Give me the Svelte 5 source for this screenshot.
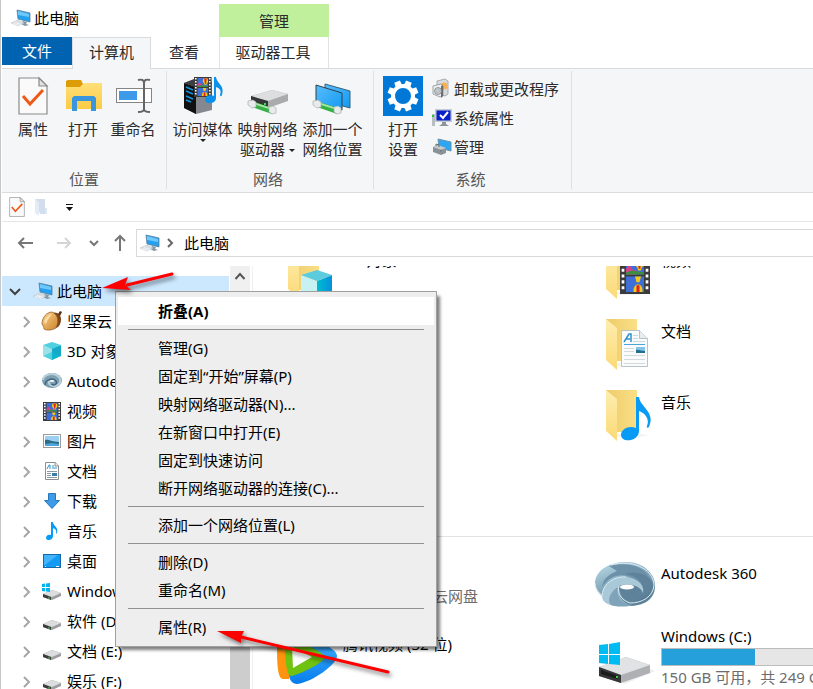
<script>
  let active = $state('computer');
  let selected = $state('此电脑');

  const tree = [
    { label: '坚果云', icon: 'nut' },
    { label: '3D 对象', icon: 'cube' },
    { label: 'Autodesk 360', icon: 'swirl' },
    { label: '视频', icon: 'film' },
    { label: '图片', icon: 'picture' },
    { label: '文档', icon: 'doc' },
    { label: '下载', icon: 'down' },
    { label: '音乐', icon: 'note' },
    { label: '桌面', icon: 'desktop' },
    { label: 'Windows (C:)', icon: 'windrive' },
    { label: '软件 (D:)', icon: 'drive' },
    { label: '文档 (E:)', icon: 'drive' },
    { label: '娱乐 (F:)', icon: 'drive' },
  ];

  const folders = [
    { label: '3D 对象', icon: 'cube' },
    { label: '视频', icon: 'film' },
    { label: '图片', icon: '' },
    { label: '文档', icon: 'doc' },
    { label: '下载', icon: '' },
    { label: '音乐', icon: 'note' },
    { label: '桌面', icon: '' },
  ];

  const devices = [
    { label: '百度网盘', icon: '', note: '双击运行百度云网盘' },
    { label: 'Autodesk 360', icon: 'swirl' },
    { label: '腾讯视频 (32 位)', icon: 'tencent' },
    { label: 'Windows (C:)', icon: 'windrive', used: 40, note: '150 GB 可用，共 249 GB' },
  ];

  // each inner list is one block between separators
  const menu = [
    ['折叠(A)'],
    ['管理(G)', '固定到“开始”屏幕(P)', '映射网络驱动器(N)...', '在新窗口中打开(E)', '固定到快速访问', '断开网络驱动器的连接(C)...'],
    ['添加一个网络位置(L)'],
    ['删除(D)', '重命名(M)'],
    ['属性(R)'],
  ];
</script>

{#snippet film()}
  <rect width="20" height="20" fill="#3b3b3b" />
  <rect x="4" width="12" height="9" y="1" fill="#3d6fd6" />
  <rect x="4" width="12" height="8" y="11" fill="#3d6fd6" />
  <path d="M4 7l2-2 3 3h2v2H4z" fill="#d8428c" />
  <path d="M4 9l4-1 8 1v1H4z" fill="#3c8f3f" />
  <path d="M10 4a3 3 0 0 1 6 0c0 2-2 2-2 4h-2c0-2-2-2-2-4z" fill="#f2c81e" />
  <path d="M11.500 1.500h3L13.500 7h-1z" fill="#d22" />
  <path d="M9 18a3 3 0 0 1 6 0v1H9zM10 11h4l-1 3h-2z" fill="#f2c81e" />
  <path d="M11 15.500h2v3.500h-2z" fill="#d22" />
  <path d="M2 1v18M18 1v18" stroke="#fff" stroke-width="1.800" stroke-dasharray="1.600 1.400" />
{/snippet}

{#snippet pc()}
  <svg class="i20" viewBox="0 0 20 20">
    <path d="M6 2l13 3v9L7 11z" fill="#23a0f0" stroke="#5c7f96" stroke-width=".8" />
    <path d="M7 3l11 3v3L7 7z" fill="#6fc8fb" />
    <path d="M12 13l4 1-1 2 3 1-4 1-4-2z" fill="#8497a3" />
    <path d="M0 15l7-3 6 3-6 3z" fill="#d9dfe4" stroke="#c0c9d0" stroke-width=".6" />
    <path d="M2 15.500l6 2M4 14.500l6 2" stroke="#fff" stroke-width=".7" />
  </svg>
{/snippet}

{#snippet sheet(cls)}
  <svg class={cls} viewBox="6 1 30 38">
    <path d="M7 2h20l8 8v28H7z" fill="#fafafa" stroke="#8a8a8a" stroke-width="1.200" />
    <path d="M27 2v8h8z" fill="#e2e2e2" stroke="#8a8a8a" stroke-width="1.200" />
    <path d="M11 20l7 8 13-14" fill="none" stroke="#ee5a16" stroke-width="3" />
  </svg>
{/snippet}

{#snippet pipe()}
  <path d="M4 25l20 7v6L4 31z" fill="#35b047" />
  <path d="M5 26l19 6v2L5 28z" fill="#a4e8a0" />
  <path d="M0 25l5-1 3 2v5l-4 1-4-3z" fill="#e7ebea" stroke="#a8b0b0" stroke-width=".7" />
  <path d="M21 31l4-1 3 2v5l-4 1-3-2z" fill="#e7ebea" stroke="#a8b0b0" stroke-width=".7" />
{/snippet}

{#snippet small(name)}
  <svg class="i20" viewBox="0 0 20 20">
    {#if name === 'nut'}
      <path d="M10 2c5-2 9 2 9 6 0 5-2 8-5 9l-3-6z" fill="#7e461c" />
      <path d="M16 3l2-3 2 1-2 4z" fill="#59310f" />
      <path d="M0 13C0 6 5 1 10 1c5 2 8 8 4 16-3 2-9 3-12 1 0-2-1-3-2-5z" fill="url(#nut)" stroke="#8c5420" stroke-width=".7" />
      <path d="M2 11c1-4 4-7 8-8-2 3-5 6-6 10z" fill="#ffe9b8" opacity=".8" />
    {:else if name === 'cube'}
      <path d="M1 4l9 3v12l-9-4z" fill="#9be2e8" />
      <path d="M10 7l9-3v11l-9 4z" fill="#16a9c7" />
      <path d="M1 4l9-3 9 3-9 4z" fill="#4fd0e0" />
      <path d="M1 15l9-4 9 4-9 4z" fill="#0cc0d4" opacity=".5" />
    {:else if name === 'swirl'}
      <ellipse cx="10" cy="9.500" rx="10" ry="7.500" fill="#7d9fb0" />
      <path d="M1 9c1-6 11-8 16-3 3 4 1 8-4 9-4 0-7-2-6-5" fill="none" stroke="#b9d1dc" stroke-width="2" />
      <path d="M3 14c0-5 7-8 11-4 2 3-2 5-5 3" fill="none" stroke="#41677e" stroke-width="1.500" />
      <ellipse cx="10" cy="10" rx="2.500" ry="1" fill="#f3f8fa" />
    {:else if name === 'film'}
      <g transform="translate(1 1) scale(.9 .95)">{@render film()}</g>
    {:else if name === 'picture'}
      <rect x="1.500" y="3.500" width="17" height="13" fill="#fff" stroke="#9b9b9b" />
      <rect x="3" y="5" width="14" height="10" fill="#9bd0f2" />
      <path d="M3 9c4-1 6 2 14 2v4H3z" fill="#2c6c83" />
      <path d="M3 13l7-1 7 1v2H3z" fill="#4ea5dd" />
    {:else if name === 'doc'}
      <path d="M3.500 1.500h10l3 3v14h-13z" fill="#fff" stroke="#8d8d8d" />
      <path d="M13 1v4h4" fill="#eee" stroke="#8d8d8d" />
      <path d="M5 8l2-4h1v4M10 5h2M10 7h5" fill="none" stroke="#2e91cc" />
      <path d="M5 10.500h10M5 12.500h4M5 14.500h4M5 16.500h10" stroke="#8a9aa5" />
      <rect x="10" y="12" width="5" height="3" fill="#367fab" />
    {:else if name === 'down'}
      <path d="M6.500 2.500h7v7h4L10 17.500 2.500 9.500h4z" fill="#3d9be9" stroke="#2576bd" />
    {:else if name === 'note'}
      <path d="M9 1h2c0 4 6 5 4 11-1 1-1 1-1 0 1-3-1-4-3-5v8c0 5-7 5-7 2 0-3 3-4 5-3z" fill="#079bf5" />
    {:else if name === 'desktop'}
      <rect x="1.500" y="3.500" width="17" height="13" fill="#129bf5" stroke="#1369aa" />
      <path d="M2 4h14L3 14H2z" fill="#43b3fc" />
      <path d="M3 15.500h1M14 15.500h3" stroke="#fff" />
    {:else}
      <path d="M1 13l9-4 9 3v3l-9 4-9-3z" fill="#9b9d9f" />
      <path d="M1 13l9-4 9 3-9 4z" fill="#dcddde" />
      <path d="M1 13l8 3v3l-8-3z" fill="#3a3c3e" />
      <path d="M6 17h2" stroke="#4cd04c" />
      {#if name === 'windrive'}
        <path d="M0 3l3-.500V6H0zM4 2.500L8 2v4H4zM0 7h3v3.500L0 10zM4 7h4v4l-4-.500z" fill="#00b4f1" />
      {/if}
    {/if}
  </svg>
{/snippet}

{#snippet folder(name)}
  <svg class="tile-icon" viewBox="0 0 60 52">
    <path d="M11 0h31v42H20z" fill="url(#folderBack)" />
    <path d="M43 44l12 1-12 2H22v-3z" fill="#e9e9e9" opacity=".6" />
    <path d="M11 0l11 9v42L11 41z" fill="url(#folderFlap)" />
    {#if name === 'cube'}
      <path d="M24 27l16 6v22l-16-5z" fill="#c8f1f4" />
      <path d="M40 33l15-6v23l-15 5z" fill="url(#cubeSide)" />
      <path d="M24 27l16-5 15 5-15 6z" fill="#5ccbdd" />
    {:else if name === 'film'}
      <g transform="translate(25 7) scale(1.5 1.95)">{@render film()}</g>
    {:else if name === 'doc'}
      <path d="M26.500 11.500h18l8 8v28h-26z" fill="#fbfbfb" stroke="#b9c2c8" />
      <path d="M44.500 11.500v8h8" fill="#e8ecef" stroke="#b9c2c8" />
      <path d="M29 23l5-8h2l0 8M31 20h4" fill="none" stroke="#2e91cc" stroke-width="1.500" />
      <path d="M38 16.500h5M38 19.500h5M38 22.500h12" stroke="#c5dbe7" />
      <path d="M29 25.500h21" stroke="#4ba5d9" />
      <path d="M29 29.500h10M29 32.500h10M29 36.500h21M29 40.500h21M29 44.500h21" stroke="#d2dade" />
      <rect x="41" y="28" width="9" height="6" fill="#83c5ea" />
      <path d="M41 31c3-1 5 1 9 1v2h-9z" fill="#246e8e" />
    {:else if name === 'note'}
      <path d="M41 7h3c1 10 17 15 10 30-1 1-3 1-2-1 3-7-2-13-8-15v20c0 10-17 13-18 4 0-6 8-10 15-7z" fill="#079bf5" />
    {/if}
  </svg>
{/snippet}

{#snippet device(name)}
  <svg class="tile-icon" viewBox="0 0 60 52">
    {#if name === 'swirl'}
      <path d="M0 23C1 10 17 2 33 3c16 1 27 12 27 24 0 14-12 20-26 20L7 37C2 33 0 28 0 23z" fill="url(#swirl)" />
      <path d="M14 7c20-5 37 1 41 13 2 9-1 15-9 20 4-8 2-15-7-20C30 14 16 14 7 28 8 20 13 16 22 12z" fill="#6c91a8" />
      <path d="M30 15c11 1 19 8 18 17-1 6-5 10-10 12 12-2 20-8 21-17-3-10-14-16-29-12z" fill="#55788f" opacity=".6" />
      <path d="M7 38c0-13 12-21 24-20 11 1 19 8 17 16-4-8-12-9-23-7-4 6-1 14 9 19-14 3-26 0-27-8z" fill="#a9c9d8" />
      <path d="M23 28c-2 10 4 17 15 18-6 2-16 2-22 0-5-5 0-14 7-18z" fill="#7fa3b8" />
      <path d="M24 27c6-3 18-2 23 5 1 4-3 9-9 12-8-2-14-8-14-17z" fill="#5d829a" />
      <ellipse cx="32" cy="28" rx="7" ry="2.500" fill="#fff" />
      <path d="M16 6c20-6 42 3 43 20-1 12-12 18-24 18-9-3-13-10-11-17M7 38c0-13 12-21 24-20M0 24c0 6 4 10 7 12" fill="none" stroke="#dcebf2" />
    {:else if name === 'windrive'}
      <path d="M20 51l35-12 5 2-30 13z" fill="#ddd" opacity=".5" />
      <path d="M4 37l27-10 24 8v8L26 53 4 46z" fill="#aeb0b3" />
      <path d="M4 37l27-10 24 8-29 10z" fill="#e1e2e4" />
      <path d="M4 37l22 8v8L4 46z" fill="#353638" />
      <path d="M6 40l17 6v3L6 44z" fill="#1c1c1c" />
      <rect x="21" y="46" width="2" height="2" fill="#37d437" />
      <path d="M4 15l9-1v10H4zM14 14l11-2v12H14zM4 25h9v9l-9-1zM14 25h11v10l-11-1z" fill="#00bcf2" />
    {:else if name === 'tencent'}
      <path d="M20 4c16 4 40 14 40 22S36 52 20 54c-5 0-7-4-8-8L10 10z" fill="url(#tvBlue)" />
      <path d="M0 14C0 6 6 4 12 5v44H6C0 49 0 30 0 14z" fill="#ff9310" />
      <path d="M8 12c0-8 40 10 40 15S22 45 14 46C9 46 8 28 8 12z" fill="#70c211" />
      <path d="M15 17l20 10-19 11z" fill="#fff" />
    {/if}
  </svg>
{/snippet}

<svg class="defs" width="0" height="0" aria-hidden="true">
  <defs>
    <linearGradient id="folderBack"><stop stop-color="#eccb6a" /><stop offset="1" stop-color="#fbdf86" /></linearGradient>
    <linearGradient id="folderFlap" x2="0" y2="1"><stop stop-color="#ffeeb0" /><stop offset="1" stop-color="#fbd976" /></linearGradient>
    <linearGradient id="cubeSide"><stop stop-color="#00bdd0" /><stop offset="1" stop-color="#078fdc" /></linearGradient>
    <linearGradient id="swirl" x2=".5" y2="1"><stop stop-color="#c1dfe9" /><stop offset=".5" stop-color="#86adc0" /><stop offset="1" stop-color="#5d8199" /></linearGradient>
    <linearGradient id="tvBlue" x2="0" y2="1"><stop stop-color="#44b8ff" /><stop offset="1" stop-color="#087cee" /></linearGradient>
    <linearGradient id="nut" x2="1" y2="1"><stop stop-color="#ffd58a" /><stop offset="1" stop-color="#c9822c" /></linearGradient>
    <linearGradient id="screen" x2="1" y2="1"><stop stop-color="#59bdfc" /><stop offset="1" stop-color="#129af2" /></linearGradient>
    <linearGradient id="openFolder" x2="0" y2="1"><stop stop-color="#ffdf78" /><stop offset="1" stop-color="#fccb45" /></linearGradient>
  </defs>
</svg>

<div class="window">
  <header>
    <div class="head-left">
      <div class="title">{@render pc()}<span>此电脑</span></div>
      <nav class="tabs">
        <button class="tab file">文件</button>
        <button class="tab computer" class:active={active === 'computer'} onclick={() => (active = 'computer')}>计算机</button>
        <button class="tab view" class:active={active === 'view'} onclick={() => (active = 'view')}>查看</button>
      </nav>
    </div>
    <div class="context">
      <div class="context-title">管理</div>
      <button class="tab tools">驱动器工具</button>
    </div>
    <div class="head-rest"></div>
  </header>

  <div class="ribbon">
    <section class="group place">
      <div class="row">
        <button class="big">
          <span class="glyph">{@render sheet('sheet-big')}</span>
          <span>属性</span>
        </button>
        <button class="big">
          <svg class="i40" viewBox="0 0 40 40">
            <path d="M3 5l2-1h13l2 4v7H3z" fill="#dd9d06" />
            <path d="M3 11h14l4-4h18v26H3z" fill="url(#openFolder)" />
            <path d="M9 35V22l2-2h20l2 2v13h-5V25H14v10z" fill="#3996dc" />
          </svg>
          <span>打开</span>
        </button>
        <button class="big">
          <svg class="i40" viewBox="0 0 40 40">
            <rect x="3.500" y="12.500" width="35" height="14" fill="#fff" stroke="#858585" />
            <rect x="6" y="15" width="18" height="9" fill="#3c9ae8" />
            <path d="M25 4c4-1 6 0 6 3 0-3 2-4 6-3M31 6v28M25 36c4 0 6-1 6-3 0 2 2 3 6 3" fill="none" stroke="#666" stroke-width="2" />
          </svg>
          <span>重命名</span>
        </button>
      </div>
      <footer>位置</footer>
    </section>

    <section class="group network">
      <div class="row">
        <button class="big">
          <svg class="i40" viewBox="0 0 40 40">
            <path d="M1 7l13-5 15 4v28l-16 4L1 32z" fill="#85888e" />
            <path d="M1 7l12 4v27L1 32z" fill="#111" />
            <path d="M3 11l7 3M3 15l7 3M3 20l7 3M3 24l5 2" stroke="#1794dc" stroke-width="1.500" />
            <path d="M1 7l13-5 15 4-16 5z" fill="#3b3e43" />
            <g transform="translate(11 1) scale(.88 1)">{@render film()}</g>
            <path d="M31 1h2c1 7 9 8 6 18-1 2-2 1-2 0 2-5-1-7-4-8v11c0 6-10 7-11 2 0-4 5-6 9-4z" fill="#0b91ec" />
          </svg>
          <span>访问媒体</span>
          <i class="caret"></i>
        </button>
        <button class="big">
          <svg class="i40" viewBox="0 0 40 40">
            <path d="M3 20l21-6 16 4v7l-20 7-17-5z" fill="#a9abad" />
            <path d="M3 20l21-6 16 4-20 7z" fill="#dddedf" />
            <path d="M3 20l17 5v7L3 27z" fill="#353638" />
            <path d="M16 28h2" stroke="#3bdd4b" stroke-width="2" />
            {@render pipe()}
          </svg>
          <span>映射网络</span>
          <span>驱动器 <i class="caret inline"></i></span>
        </button>
        <button class="big">
          <svg class="i40" viewBox="0 0 40 40">
            <path d="M12 8l25 7v17l-25-7z" fill="url(#screen)" stroke="#34617b" />
            <path d="M3 9l26 8v17L3 26z" fill="url(#screen)" stroke="#31404a" />
            {@render pipe()}
          </svg>
          <span>添加一个</span>
          <span>网络位置</span>
        </button>
      </div>
      <footer>网络</footer>
    </section>

    <section class="group system">
      <div class="row">
        <button class="big">
          <svg class="i40" viewBox="0 0 40 40">
            <rect width="40" height="40" fill="#0078d7" />
            <g fill="#fff">
              {#each [0, 45, 90, 135, 180, 225, 270, 315] as a}
                <path d="M16.500 11L17 4.500h6l.500 6.500z" transform="rotate({a + 22.5} 20 20)" />
              {/each}
            </g>
            <circle cx="20" cy="20" r="10" fill="none" stroke="#fff" stroke-width="4" />
          </svg>
          <span>打开</span>
          <span>设置</span>
        </button>
        <div class="list">
          <button>
            <svg class="i20" viewBox="0 0 20 20">
              <path d="M5 2l8-2 3 2v13l-3 2-8-2z" fill="#d9dbdd" stroke="#8e9499" stroke-width=".7" />
              <circle cx="12" cy="7" r="3.500" fill="#f6b052" />
              <path d="M1 7l8-2 2 2v10l-3 1-7-3z" fill="#eef0f1" stroke="#7d8388" stroke-width=".7" />
              <path d="M9 7l2-1v11l-2 2z" fill="#666c70" />
              <circle cx="6" cy="12" r="3.500" fill="#c5ccd0" stroke="#777" stroke-width=".7" />
              <circle cx="6" cy="12" r="1.200" fill="#fff" stroke="#777" stroke-width=".5" />
            </svg>
            卸载或更改程序
          </button>
          <button>
            <svg class="i20" viewBox="0 0 20 20">
              <path d="M0 6h3v12H0z" fill="#b7bfc5" />
              <path d="M0 8h2" stroke="#24c932" stroke-width="2" />
              <rect x="3" y="1" width="17" height="13" fill="#c6cbd0" />
              <rect x="4.500" y="2.500" width="14" height="10" fill="#0a20c8" />
              <path d="M8 7l3 3 5-6" fill="none" stroke="#fff" stroke-width="2" />
              <path d="M10 14h4v2l3 2H7l3-2z" fill="#8d949a" />
            </svg>
            系统属性
          </button>
          <button>
            <svg class="i20" viewBox="0 0 20 20">
              <path d="M6 2l13 3v9L7 11z" fill="#2ba6f3" stroke="#6a93aa" />
              <path d="M1 10l5-2 8 3v5l-5 2-8-3z" fill="#8b9297" />
              <path d="M1 10l5-2 8 3-5 2z" fill="#c3c9cc" />
              <path d="M4 9V7l3 1v2M8 14l2-1" fill="none" stroke="#666d72" />
            </svg>
            管理
          </button>
        </div>
      </div>
      <footer>系统</footer>
    </section>
  </div>

  <div class="quick">
    <button aria-label="属性">{@render sheet('sheet-small')}</button>
    <button aria-label="新建文件夹">
      <svg class="i20" viewBox="0 0 20 20">
        <path d="M4 2h10v15H9z" fill="#d2deee" />
        <path d="M4 2l4 3v14l-4-3z" fill="#e3ebf7" />
        <path d="M14 11h2v6h-2z" fill="#dde6f3" />
      </svg>
    </button>
    <button aria-label="自定义快速访问工具栏">
      <svg class="i20" viewBox="0 0 20 20"><path d="M7 7.500h7" stroke="#111" /><path d="M7 10h7l-3.500 4z" fill="#111" /></svg>
    </button>
  </div>

  <div class="address-row">
    <button class="nav" aria-label="后退"><svg viewBox="0 0 20 20"><path d="M17 10H3M8 5l-5 5 5 5" stroke="#777" /></svg></button>
    <button class="nav wide" aria-label="前进" disabled><svg viewBox="0 0 20 20"><path d="M2 10h13M10 5l5 5-5 5" stroke="#d5d5d5" /></svg></button>
    <button class="nav thin" aria-label="最近浏览的位置"><svg viewBox="0 0 20 20"><path d="M6 8l4 4 4-4" stroke="#777" /></svg></button>
    <button class="nav up" aria-label="上移"><svg viewBox="0 0 20 20"><path d="M10 18V3M5 8l5-5 5 5" stroke="#777" /></svg></button>
    <div class="address">
      {@render pc()}
      <svg class="crumb" viewBox="0 0 10 10"><path d="M3 1l4 4-4 4" /></svg>
      <button>此电脑</button>
    </div>
  </div>

  <div class="panes">
    <aside>
      <ul>
        <li>
          <button class="node root" class:selected={selected === '此电脑'} onclick={() => (selected = '此电脑')}>
            <svg class="chev" viewBox="0 0 12 12"><path d="M1 4l5 5 5-5" stroke="#404040" /></svg>
            {@render pc()}
            <span>此电脑</span>
          </button>
        </li>
        {#each tree as item}
          <li>
            <button class="node" class:selected={selected === item.label} onclick={() => (selected = item.label)}>
              <svg class="chev" viewBox="0 0 12 12"><path d="M4 2l5 5-5 5" stroke="#a6a6a6" /></svg>
              {@render small(item.icon)}
              <span>{item.label}</span>
            </button>
          </li>
        {/each}
      </ul>
    </aside>
    <div class="scrollbar">
      <button aria-label="向上滚动"><svg viewBox="0 0 20 20"><path d="M5.500 13L10 8l4.500 5" /></svg></button>
      <div class="thumb"></div>
    </div>
    <main>
      <div class="tiles folders">
        {#each folders as f}
          <button class="tile">
            {@render folder(f.icon)}
            <span class="name">{f.label}</span>
          </button>
        {/each}
      </div>
      <h2>设备和驱动器</h2>
      <div class="tiles devices">
        {#each devices as d}
          <button class="tile">
            {@render device(d.icon)}
            <span class="info" class:volume={d.used}>
              <span class="name">{d.label}</span>
              {#if d.used}
                <span class="bar"><span style="width: {d.used}%"></span></span>
              {/if}
              {#if d.note}<span class="note">{d.note}</span>{/if}
            </span>
          </button>
        {/each}
      </div>
    </main>
  </div>

  <div class="menu" role="menu">
    {#each menu as block, i}
      {#if i > 0}<hr />{/if}
      {#each block as entry}
        <button role="menuitem" class:current={i === 0}>{entry}</button>
      {/each}
    {/each}
  </div>

  <svg class="arrow first" viewBox="0 0 80 36" aria-hidden="true">
    <path d="M28 18l45-11" stroke="#f00" stroke-width="3" stroke-linecap="round" />
    <path d="M3 21l26-11-3 8 6 5z" fill="#f00" />
  </svg>
  <svg class="arrow second" viewBox="0 0 184 56" aria-hidden="true">
    <path d="M26 13l147 35" stroke="#f00" stroke-width="3" stroke-linecap="round" />
    <path d="M2 7l27 0-3 6 0 6z" fill="#f00" />
  </svg>
</div>

<style>
  :global(body) {
    margin: 0;
    background: #fff;
  }
  .window {
    position: relative;
    display: flex;
    flex-direction: column;
    height: 100vh;
    overflow: hidden;
    box-sizing: border-box;
    border-left: 1px solid #c6c6c6;
    padding-left: 1px;
    background: #fff;
    color: #000;
    font: 15px/20px 'Noto Sans', 'Noto Sans CJK SC', sans-serif;
  }
  .defs {
    position: absolute;
  }
  button {
    margin: 0;
    padding: 0;
    border: 0;
    background: none;
    color: inherit;
    font: inherit;
    white-space: nowrap;
  }
  svg {
    display: block;
    flex: none;
    overflow: visible;
  }
  .i20 {
    width: 20px;
    height: 20px;
  }
  .i40 {
    width: 40px;
    height: 40px;
  }

  header {
    display: flex;
    height: 69px;
    flex: none;
  }
  .head-left {
    display: flex;
    flex-direction: column;
    width: 217px;
  }
  .title {
    display: flex;
    align-items: center;
    gap: 3px;
    box-sizing: border-box;
    height: 37px;
    padding: 0 0 2px 9px;
  }
  .tabs {
    display: flex;
    align-items: flex-start;
    height: 32px;
    box-sizing: border-box;
    border-bottom: 1px solid #dadbdc;
  }
  .tab {
    box-sizing: border-box;
    height: 31px;
    padding-bottom: 2px;
    color: #2b2b2b;
  }
  .tab.file {
    width: 70px;
    height: 28px;
    padding: 0;
    background: #0063b1;
    color: #fff;
  }
  .tab.computer {
    width: 79px;
  }
  .tab.view {
    width: 66px;
  }
  .tab.active {
    height: 32px;
    padding-bottom: 4px;
    border: 1px solid #dadbdc;
    border-bottom: 0;
    background: #f5f6f7;
  }
  .context {
    display: flex;
    flex-direction: column;
    width: 110px;
    padding-top: 4px;
    border-bottom: 1px solid #dadbdc;
  }
  .context-title {
    height: 33px;
    background: #c0f09c;
    color: #2b2b2b;
    line-height: 34px;
    text-align: center;
  }
  .tab.tools {
    padding-right: 2px;
    border: solid #e2e2e2;
    border-width: 0 1px;
  }
  .head-rest {
    flex: 1;
    border-bottom: 1px solid #dadbdc;
  }

  .ribbon {
    display: flex;
    flex: none;
    height: 123px;
    border-bottom: 1px solid #dadbdc;
    background: #f5f6f7;
    color: #2b2b2b;
  }
  .group {
    display: flex;
    flex-direction: column;
    justify-content: space-between;
    margin: 2px 0 3px;
    border-right: 1px solid #dfe0e1;
  }
  .group footer {
    color: #555;
    text-align: center;
  }
  .row {
    display: flex;
    padding: 3px 8px 0 6px;
  }
  .network .row {
    padding: 3px 8px 0 3px;
  }
  .network footer,
  .system footer {
    padding-right: 4px;
  }
  .system .row {
    padding: 3px 12px 0 4px;
  }
  .big {
    display: flex;
    flex-direction: column;
    align-items: center;
    width: 50px;
    padding-top: 2px;
  }
  .big .i40,
  .glyph {
    margin-bottom: 3px;
  }
  .glyph {
    display: flex;
    align-items: center;
    justify-content: center;
    height: 40px;
  }
  .network .big {
    width: 65px;
  }
  .sheet-big {
    width: 30px;
    height: 38px;
  }
  .sheet-small {
    width: 16px;
    height: 20px;
  }
  .caret {
    border: solid transparent;
    border-width: 3px 3px 0;
    border-top-color: #222;
  }
  .caret.inline {
    display: inline-block;
    vertical-align: middle;
  }
  .list {
    display: flex;
    flex-direction: column;
    padding-left: 4px;
  }
  .list button {
    display: flex;
    align-items: center;
    gap: 2px;
    height: 29px;
  }

  .quick {
    display: flex;
    align-items: center;
    gap: 6px;
    flex: none;
    height: 28px;
    padding-left: 7px;
    border-bottom: 1px solid #e5e5e5;
  }
  .quick button:last-child {
    padding-left: 2px;
  }
  .address-row {
    display: flex;
    align-items: center;
    box-sizing: border-box;
    flex: none;
    height: 44px;
    padding: 0 0 2px 14px;
  }
  .nav {
    width: 26px;
  }
  .nav.wide {
    width: 36px;
    padding-left: 13px;
  }
  .nav.thin {
    width: 28px;
    padding-left: 6px;
  }
  .nav.up {
    width: 30px;
    padding-left: 4px;
  }
  .nav svg {
    width: 20px;
    height: 20px;
    fill: none;
    stroke-width: 2;
  }
  .address {
    display: flex;
    align-items: center;
    flex: 1;
    height: 26px;
    border: 1px solid #d9d9d9;
    border-right: 0;
    padding-left: 3px;
  }
  .crumb {
    width: 10px;
    height: 10px;
    margin: 0 9px 0 5px;
    fill: none;
    stroke: #666;
    stroke-width: 2;
  }

  .panes {
    display: flex;
    flex: 1;
    min-height: 0;
  }
  aside {
    flex: 0 0 227px;
    overflow: hidden;
  }
  ul {
    list-style: none;
    margin: 0;
    padding: 10px 0 0;
  }
  .node {
    display: flex;
    align-items: center;
    gap: 5px;
    width: 100%;
    height: 30px;
    padding-left: 18px;
  }
  .node .chev {
    width: 12px;
    height: 12px;
    margin-right: 5px;
    fill: none;
    stroke-width: 2;
  }
  .node.root {
    gap: 4px;
    padding-left: 7px;
  }
  .node.root .chev {
    margin-right: 8px;
  }
  .node.selected {
    background: #cce8ff;
  }
  .scrollbar {
    display: flex;
    flex-direction: column;
    flex: 0 0 20px;
    margin: 0 2px 0 1px;
    background: #f0f0f0;
  }
  .scrollbar svg {
    width: 20px;
    height: 20px;
    fill: none;
    stroke: #555;
    stroke-width: 2;
  }
  .thumb {
    flex: 1;
    margin-top: 180px;
    background: #cdcdcd;
  }

  main {
    flex: 1;
    min-width: 0;
    overflow: hidden;
    border-left: 1px solid #f0f0f0;
    padding-left: 24px;
  }
  .tiles {
    display: grid;
    grid-template-columns: 318px 318px;
  }
  /* the list is scrolled part of a row */
  .folders {
    grid-auto-rows: 52px;
    row-gap: 19px;
    margin-top: -18px;
  }
  .devices {
    grid-auto-rows: 71px;
  }
  .tile {
    display: flex;
    align-items: flex-start;
    gap: 6px;
    text-align: left;
  }
  .devices .tile {
    align-items: center;
  }
  .tile-icon {
    width: 60px;
    height: 52px;
  }
  .name {
    line-height: 24px;
  }
  .info {
    display: flex;
    flex-direction: column;
    align-self: flex-start;
    padding-top: 12px;
  }
  .info.volume {
    padding-top: 4px;
  }
  .note {
    color: #6d6d6d;
    line-height: 22px;
  }
  .bar {
    width: 232px;
    height: 16px;
    border: 1px solid #bcbcbc;
    background: #e6e6e6;
  }
  .bar span {
    display: block;
    height: 100%;
    background: #26a0da;
  }
  h2 {
    display: flex;
    align-items: center;
    gap: 8px;
    height: 25px;
    margin: 11px 0 0;
    color: #1e3287;
    font-size: 15px;
    font-weight: 400;
  }
  h2::after {
    content: '';
    flex: 1;
    border-top: 1px solid #e2e2e2;
  }

  .menu {
    position: absolute;
    top: 291px;
    left: 114px;
    display: flex;
    flex-direction: column;
    box-sizing: border-box;
    width: 322px;
    padding: 5px 2px;
    border: 1px solid #a0a0a0;
    background: #eee;
    box-shadow: 4px 4px 3px -1px rgba(0, 0, 0, 0.5);
  }
  .menu button {
    height: 28px;
    padding-left: 40px;
    text-align: left;
  }
  .menu .current {
    background: #fff;
    font-weight: 700;
  }
  .menu hr {
    margin: 4px 10px;
    border: 0;
    border-top: 1px solid #919191;
  }

  .arrow {
    position: absolute;
    fill: none;
    filter: drop-shadow(2px 3px 2px rgba(0, 0, 0, 0.5));
    pointer-events: none;
  }
  .arrow.first {
    top: 267px;
    left: 98px;
    width: 80px;
    height: 36px;
  }
  .arrow.second {
    top: 624px;
    left: 214px;
    width: 184px;
    height: 56px;
  }
</style>
